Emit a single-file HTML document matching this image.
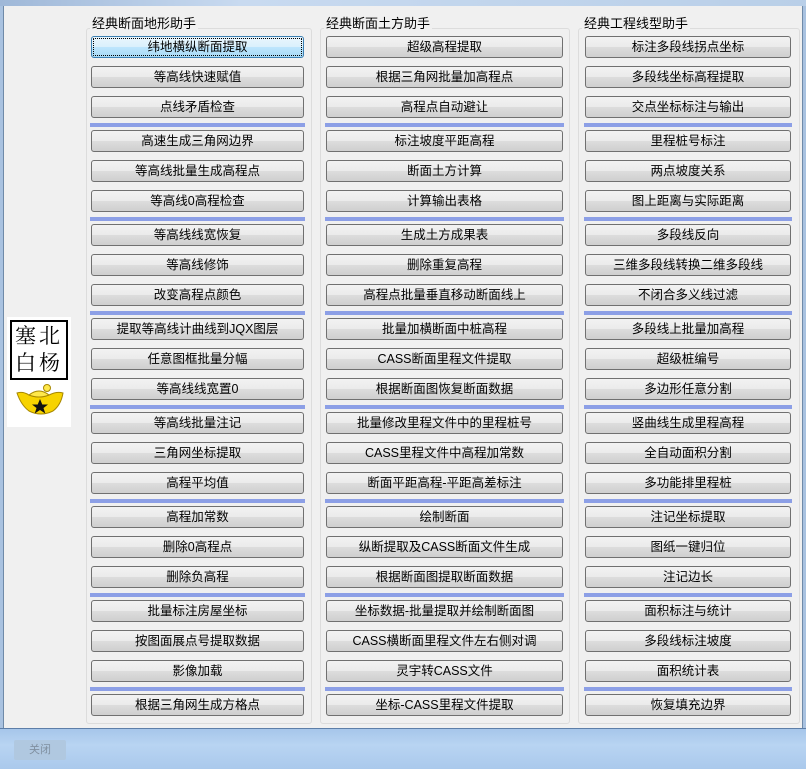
<!DOCTYPE html>
<html><head><meta charset="utf-8"><style>
body{margin:0;width:806px;height:768px;overflow:hidden;background:#f0f0f0;font-family:"Liberation Sans","Noto Sans CJK SC","WenQuanYi Zen Hei",sans-serif;position:relative}
.top{position:absolute;left:0;top:0;width:806px;height:6px;background:linear-gradient(90deg,#9fb8d8,#c8daf0 30%,#b9cfe8)}
.lb{position:absolute;left:0;top:6px;width:3px;height:722px;background:#a9c2e0;border-right:1px solid #6f8aa8}
.rb{position:absolute;right:0;top:6px;width:3px;height:722px;background:#a9c2e0;border-left:1px solid #6f8aa8}
.bot{position:absolute;left:0;top:728px;width:806px;height:40px;background:linear-gradient(#a6c6ea,#b8d4f2 40%,#aac9ec);border-top:1px solid #5d7ea8}
.bbtn{position:absolute;left:14px;top:740px;width:52px;height:20px;background:#b0c8e0;border-radius:2px;color:#8090a0;font-size:11px;text-align:center;line-height:20px}
.grp{position:absolute;top:28px;height:694px;border:1px solid #dcdcdc;border-radius:3px}
.tt{position:absolute;top:16px;font-size:13px;color:#000;background:#f0f0f0;padding:0 2px;line-height:16px}
.b{position:absolute;height:20px;border:1px solid #707070;border-radius:3px;background:linear-gradient(#f2f2f2,#ebebeb 50%,#dddddd 50%,#cfcfcf);font-size:12.5px;text-align:center;line-height:20px;color:#000;white-space:nowrap}
.b.f{border-color:#3c7fb1;background:linear-gradient(#eaf6fd,#d9f0fc 50%,#bee6fd 50%,#a7d9f5);outline:1px dotted #000;outline-offset:-3px}
.s{position:absolute;height:4px;background:#8c9fe6}
.logo{position:absolute;left:7px;top:317px;width:64px;height:110px;background:#fff}
.lg{position:absolute;left:3px;top:3px;width:54px;height:56px;border:2px solid #000;font-family:"Noto Serif CJK SC",serif;font-size:21px;line-height:27px;text-align:center;letter-spacing:3px}
</style></head><body>
<div class="top"></div><div class="lb"></div><div class="rb"></div>
<div class="logo"><div class="lg">塞北<br>白杨</div>
<svg style="position:absolute;left:8px;top:66px" width="50" height="36" viewBox="0 0 50 36"><path d="M2 10 Q8 8 14 12 Q24 16 34 12 Q42 8 48 10 Q46 22 38 28 Q26 34 14 28 Q6 22 2 10Z" fill="#f7d300" stroke="#a88800"/><path d="M14 12 Q24 4 34 12 Q24 16 14 12Z" fill="#ffe84a" stroke="#a88800"/><circle cx="32" cy="5" r="3.5" fill="#ffe84a" stroke="#a88800"/><polygon points="25,16 27.3,21.5 33,21.5 28.5,25 30.3,30.5 25,27 19.7,30.5 21.5,25 17,21.5 22.7,21.5" fill="#111"/></svg></div>
<div id="c"></div>
<div class="bot"></div><div class="bbtn">关闭</div>
<script>
var cols=[
{gx:86,gw:224,bx:91,bw:213,t:"经典断面地形助手",items:["纬地横纵断面提取","等高线快速赋值","点线矛盾检查","高速生成三角网边界","等高线批量生成高程点","等高线0高程检查","等高线线宽恢复","等高线修饰","改变高程点颜色","提取等高线计曲线到JQX图层","任意图框批量分幅","等高线线宽置0","等高线批量注记","三角网坐标提取","高程平均值","高程加常数","删除0高程点","删除负高程","批量标注房屋坐标","按图面展点号提取数据","影像加载","根据三角网生成方格点"]},
{gx:320,gw:248,bx:326,bw:237,t:"经典断面土方助手",items:["超级高程提取","根据三角网批量加高程点","高程点自动避让","标注坡度平距高程","断面土方计算","计算输出表格","生成土方成果表","删除重复高程","高程点批量垂直移动断面线上","批量加横断面中桩高程","CASS断面里程文件提取","根据断面图恢复断面数据","批量修改里程文件中的里程桩号","CASS里程文件中高程加常数","断面平距高程-平距高差标注","绘制断面","纵断提取及CASS断面文件生成","根据断面图提取断面数据","坐标数据-批量提取并绘制断面图","CASS横断面里程文件左右侧对调","灵宇转CASS文件","坐标-CASS里程文件提取"]},
{gx:578,gw:220,bx:585,bw:206,t:"经典工程线型助手",items:["标注多段线拐点坐标","多段线坐标高程提取","交点坐标标注与输出","里程桩号标注","两点坡度关系","图上距离与实际距离","多段线反向","三维多段线转换二维多段线","不闭合多义线过滤","多段线上批量加高程","超级桩编号","多边形任意分割","竖曲线生成里程高程","全自动面积分割","多功能排里程桩","注记坐标提取","图纸一键归位","注记边长","面积标注与统计","多段线标注坡度","面积统计表","恢复填充边界"]}];
var h="";
cols.forEach(function(c,ci){
h+='<div class="grp" style="left:'+c.gx+'px;width:'+c.gw+'px"></div>';
h+='<div class="tt" style="left:'+(c.gx+4)+'px">'+c.t+'</div>';
c.items.forEach(function(it,i){
var g=Math.floor(i/3),r=i%3,y=36+g*94+r*30;
h+='<div class="b'+(ci==0&&i==0?' f':'')+'" style="left:'+c.bx+'px;top:'+y+'px;width:'+(c.bw-2)+'px">'+it+'</div>';
if(r==0&&g>0)h+='<div class="s" style="left:'+(c.bx-1)+'px;top:'+(y-7)+'px;width:'+(c.bw+2)+'px"></div>';
});});
document.getElementById("c").innerHTML=h;
</script>
</body></html>
